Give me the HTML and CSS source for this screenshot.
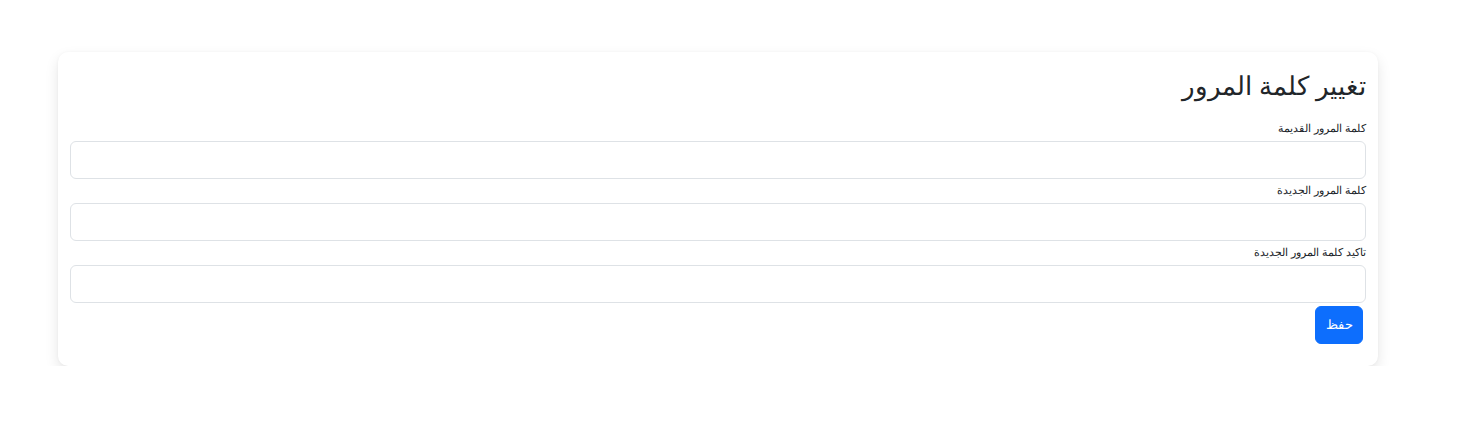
FILE: index.html
```html
<!DOCTYPE html>
<html lang="ar" dir="rtl">
<head>
<meta charset="utf-8">
<title>تغيير كلمة المرور</title>
<link rel="stylesheet" href="styles.css">
</head>
<body>
<div class="page">
  <div class="card">
    <h3 class="title">تغيير كلمة المرور</h3>
    <form class="form">
      <label class="label" for="old">كلمة المرور القديمة</label>
      <input class="input" id="old" type="password">
      <label class="label" for="new">كلمة المرور الجديدة</label>
      <input class="input" id="new" type="password">
      <label class="label" for="confirm">تاكيد كلمة المرور الجديدة</label>
      <input class="input" id="confirm" type="password">
      <div class="actions">
        <button class="btn" type="button">حفظ</button>
      </div>
    </form>
  </div>
</div>
</body>
</html>
```

FILE: styles.css
```css
* { box-sizing: border-box; }
html, body { margin: 0; padding: 0; background: #fff; }
body {
  font-family: "Liberation Sans", Arial, sans-serif;
  color: #212529;
}
.page {
  padding-top: 52px;
  display: flex;
  justify-content: flex-end;
  padding-left: 58px;
}
.card {
  width: 1320px;
  background: #fff;
  border-radius: 10px;
  box-shadow: 0 6px 14px rgba(0, 0, 0, 0.1), 0 0 3px rgba(0, 0, 0, 0.04);
  padding: 17px 12px 22px;
}
.title {
  margin: 0 0 14px;
  font-size: 26px;
  font-weight: 400;
  line-height: 34px;
}
.form { display: flex; flex-direction: column; }
.label {
  display: block;
  font-size: 11px;
  line-height: 18px;
  margin: 2px 0 4px;
}
.input {
  display: block;
  width: 100%;
  height: 38px;
  border: 1px solid #dee2e6;
  border-radius: 6px;
  background: #fff;
  font: inherit;
  padding: 6px 12px;
}
.actions { display: flex; margin-top: 3px; }
.btn {
  margin-right: 3px;
  width: 48px;
  height: 38px;
  padding: 0;
  background: #0d6efd;
  color: #fff;
  border: 1px solid #0d6efd;
  border-radius: 6px;
  font-family: "Liberation Sans", Arial, sans-serif;
  font-size: 13px;
  line-height: 1.5;
}
```
